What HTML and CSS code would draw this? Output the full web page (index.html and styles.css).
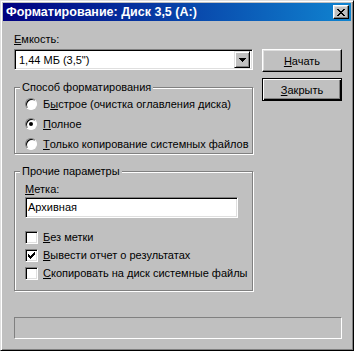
FILE: index.html
```html
<!DOCTYPE html>
<html lang="ru">

<head>
    <meta charset="UTF-8">
    <title>Форматирование: Диск 3,5 (A:)</title>
    <link rel="stylesheet" href="styles.css">
</head>

<body>
    <div class="window">
        <!-- Заголовок -->
        <div class="titlebar">
            <span class="title">Форматирование: Диск 3,5 (A:)</span>
            <button class="close-btn" type="button">
                <svg width="8" height="7" viewBox="0 0 8 7" shape-rendering="crispEdges">
                    <path fill="#000" d="M0 0h2v1h-2z M6 0h2v1h-2z M1 1h2v1h-2z M5 1h2v1h-2z M2 2h4v1h-4z M3 3h2v1h-2z M2 4h4v1h-4z M1 5h2v1h-2z M5 5h2v1h-2z M0 6h2v1h-2z M6 6h2v1h-2z" />
                </svg>
            </button>
        </div>

        <div class="dialog">
            <div class="main">
                <div class="left">
                    <div class="label"><u>Е</u>мкость:</div>
                    <div class="combo">
                        <span class="combo-value">1,44 МБ (3,5")</span>
                        <span class="combo-arrow">
                            <svg width="7" height="4" viewBox="0 0 7 4" shape-rendering="crispEdges">
                                <path fill="#000" d="M0 0h7v1h-7z M1 1h5v1h-5z M2 2h3v1h-3z M3 3h1v1h-1z" />
                            </svg>
                        </span>
                    </div>

                    <!-- Способ форматирования -->
                    <div class="group group-mode">
                        <span class="group-title">Способ форматирования</span>
                        <div class="option"><span class="radio"></span>Б<u>ы</u>строе (очистка оглавления диска)</div>
                        <div class="option"><span class="radio checked"></span><u>П</u>олное</div>
                        <div class="option"><span class="radio"></span><u>Т</u>олько копирование системных файлов</div>
                    </div>

                    <!-- Прочие параметры -->
                    <div class="group group-other">
                        <span class="group-title">Прочие параметры</span>
                        <div class="label"><u>М</u>етка:</div>
                        <div class="textbox">Архивная</div>
                        <div class="checks">
                            <div class="option check-row"><span class="checkbox"></span><u>Б</u>ез метки</div>
                            <div class="option check-row">
                                <span class="checkbox">
                                    <svg width="7" height="7" viewBox="0 0 7 7" shape-rendering="crispEdges">
                                        <path fill="#000" d="M6 0h1v3h-1z M5 1h1v3h-1z M4 2h1v3h-1z M3 3h1v3h-1z M2 4h1v3h-1z M1 3h1v3h-1z M0 2h1v3h-1z" />
                                    </svg>
                                </span><u>В</u>ывести отчет о результатах
                            </div>
                            <div class="option check-row"><span class="checkbox"></span><u>С</u>копировать на диск системные файлы</div>
                        </div>
                    </div>
                </div>

                <div class="right">
                    <button class="btn" type="button"><u>Н</u>ачать</button>
                    <button class="btn default" type="button"><u>З</u>акрыть</button>
                </div>
            </div>

            <div class="status"></div>
        </div>
    </div>
</body>

</html>
```

FILE: styles.css
```css
body {
    margin: 0;
    padding: 0;
    background-color: #c0c0c0;
    font-family: "Liberation Sans", Arial, sans-serif;
    font-size: 11px;
    color: #000;
}

u {
    text-decoration: underline;
    text-underline-offset: 1px;
}

.window {
    width: 354px;
    height: 351px;
    box-sizing: border-box;
    padding: 2px;
    background: #c0c0c0;
    border: 1px solid;
    border-color: #dfdfdf #000 #000 #dfdfdf;
    box-shadow: inset 1px 1px #fff, inset -1px -1px #808080;
    display: flex;
    flex-direction: column;
}

/* Заголовок окна */
.titlebar {
    height: 18px;
    flex: none;
    display: flex;
    align-items: center;
    padding: 0 2px 0 3px;
    background: linear-gradient(to right, #000080, #1084d0);
    color: #fff;
    font-weight: bold;
    font-size: 12.5px;
}

.title {
    flex: 1;
    white-space: nowrap;
}

.close-btn {
    width: 16px;
    height: 14px;
    padding: 0;
    box-sizing: border-box;
    background: #c0c0c0;
    border: 1px solid;
    border-color: #fff #000 #000 #fff;
    box-shadow: inset -1px -1px #808080, inset 1px 1px #dfdfdf;
    display: flex;
    align-items: center;
    justify-content: center;
}

.dialog {
    flex: 1;
    display: flex;
    flex-direction: column;
    padding: 12px 9px 9px 11px;
}

.main {
    display: flex;
    justify-content: space-between;
}

.left {
    width: 239px;
}

.right {
    width: 80px;
    display: flex;
    flex-direction: column;
    gap: 6px;
    padding-top: 16px;
}

.label {
    height: 13px;
    line-height: 13px;
}

/* Поле со списком */
.combo {
    height: 21px;
    margin-top: 3px;
    box-sizing: border-box;
    background: #fff;
    border: 1px solid;
    border-color: #808080 #fff #fff #808080;
    box-shadow: inset 1px 1px #000, inset -1px -1px #dfdfdf;
    padding: 2px;
    display: flex;
    align-items: center;
}

.combo-value {
    flex: 1;
    padding-left: 2px;
}

.combo-arrow {
    width: 16px;
    height: 17px;
    box-sizing: border-box;
    background: #c0c0c0;
    border: 1px solid;
    border-color: #dfdfdf #000 #000 #dfdfdf;
    box-shadow: inset 1px 1px #fff, inset -1px -1px #808080;
    display: flex;
    align-items: center;
    justify-content: center;
}

/* Рамки групп */
.group {
    position: relative;
    box-sizing: border-box;
    border: 1px solid #808080;
    box-shadow: inset 1px 1px #fff, 1px 1px #fff;
    padding-left: 10px;
}

.group-title {
    position: absolute;
    top: -7px;
    left: 5px;
    padding: 0 2px;
    line-height: 13px;
    background: #c0c0c0;
    white-space: nowrap;
}

.group-mode {
    margin-top: 17px;
    height: 67px;
    padding-top: 6px;
}

.group-other {
    margin-top: 17px;
    height: 120px;
    padding-top: 11px;
}

.option {
    height: 20px;
    display: flex;
    align-items: center;
    white-space: nowrap;
}

.radio {
    width: 12px;
    height: 12px;
    box-sizing: border-box;
    border-radius: 50%;
    background: #fff;
    border: 1px solid;
    border-color: #808080 #fff #fff #808080;
    box-shadow: inset 1px 1px #000;
    margin-right: 6px;
    display: flex;
    align-items: center;
    justify-content: center;
}

.radio.checked::after {
    content: "";
    width: 4px;
    height: 4px;
    border-radius: 50%;
    background: #000;
}

.textbox {
    width: 213px;
    height: 21px;
    margin-top: 1px;
    box-sizing: border-box;
    background: #fff;
    border: 1px solid;
    border-color: #808080 #fff #fff #808080;
    box-shadow: inset 1px 1px #000, inset -1px -1px #dfdfdf;
    padding-left: 2px;
    line-height: 19px;
}

.checks {
    margin-top: 10px;
}

.check-row {
    height: 18px;
}

.checkbox {
    width: 13px;
    height: 13px;
    box-sizing: border-box;
    background: #fff;
    border: 1px solid;
    border-color: #808080 #fff #fff #808080;
    box-shadow: inset 1px 1px #000, inset -1px -1px #dfdfdf;
    margin-right: 5px;
    display: flex;
    align-items: center;
    justify-content: center;
}

/* Кнопки */
.btn {
    height: 23px;
    padding: 0;
    box-sizing: border-box;
    font-family: inherit;
    font-size: 11px;
    color: #000;
    background: #c0c0c0;
    border: 1px solid;
    border-color: #fff #000 #000 #fff;
    box-shadow: inset -1px -1px #808080, inset 1px 1px #dfdfdf;
}

.btn.default {
    border-color: #000;
    box-shadow: inset 1px 1px #fff, inset -1px -1px #000, inset -2px -2px #808080;
}

.status {
    margin-top: auto;
    height: 22px;
    box-sizing: border-box;
    border: 1px solid;
    border-color: #808080 #fff #fff #808080;
}
```
